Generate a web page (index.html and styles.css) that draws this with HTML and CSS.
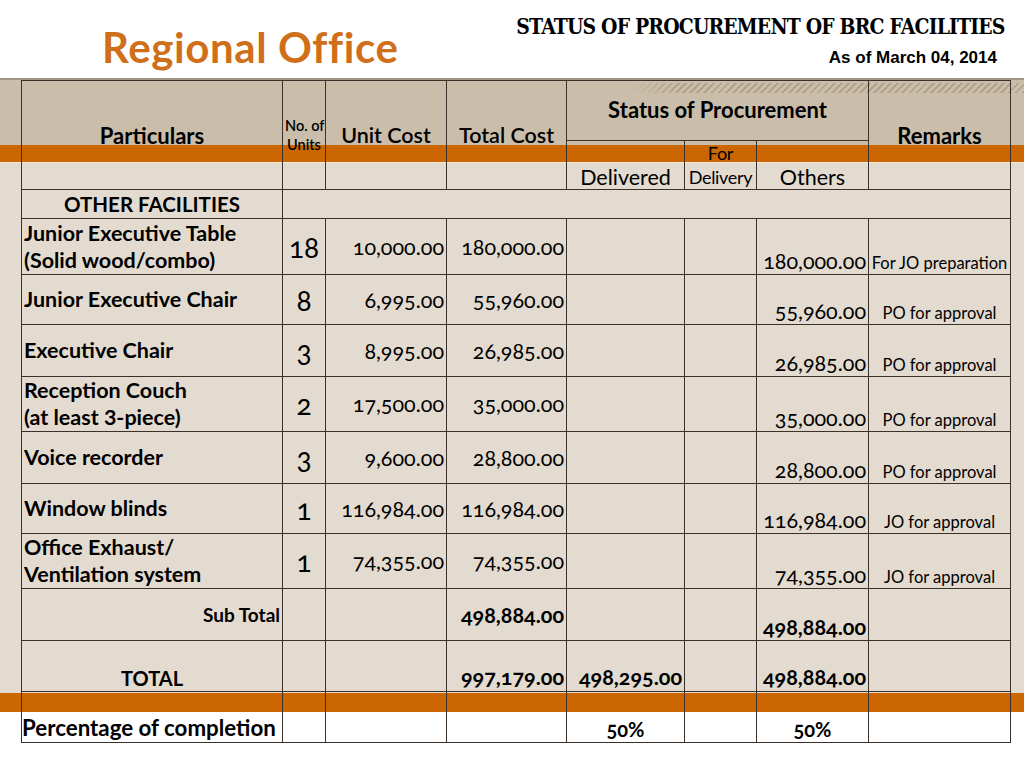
FILE: index.html
```html
<!DOCTYPE html>
<html>
<head>
<meta charset="utf-8">
<title>Regional Office - Status of Procurement</title>
<link rel="stylesheet" href="styles.css">
</head>
<body>
<div class="slide">
  <header class="top">
    <h1 class="title">Regional Office</h1>
    <div class="meta">
      <div class="doc-title">STATUS OF PROCUREMENT OF BRC FACILITIES</div>
      <div class="date">As of March 04, 2014</div>
    </div>
  </header>
  <div class="panel">
    <table class="grid">
      <colgroup>
        <col class="c-part"><col class="c-units"><col class="c-unit"><col class="c-total">
        <col class="c-del"><col class="c-fordel"><col class="c-oth"><col class="c-rem">
      </colgroup>
      <thead>
        <tr class="r-h1">
          <th rowspan="2" class="hd">Particulars</th>
          <th rowspan="2" class="hd-small">No. of<br>Units</th>
          <th rowspan="2" class="hd semi">Unit Cost</th>
          <th rowspan="2" class="hd semi">Total Cost</th>
          <th colspan="3" class="hd status">Status of Procurement</th>
          <th rowspan="2" class="hd">Remarks</th>
        </tr>
        <tr class="r-h2">
          <th class="sub">Delivered</th>
          <th class="sub small">For<br>Delivery</th>
          <th class="sub">Others</th>
        </tr>
      </thead>
      <tbody>
        <tr class="r-cat">
          <td class="cat">OTHER FACILITIES</td>
          <td colspan="7"></td>
        </tr>
        <tr class="r-56">
          <td class="part">Junior Executive Table<br>(Solid wood/combo)</td>
          <td class="units">18</td>
          <td class="num">10,000.00</td>
          <td class="num">180,000.00</td>
          <td></td><td></td>
          <td class="oth">180,000.00</td>
          <td class="rem">For JO preparation</td>
        </tr>
        <tr class="r-50">
          <td class="part">Junior Executive Chair</td>
          <td class="units">8</td>
          <td class="num">6,995.00</td>
          <td class="num">55,960.00</td>
          <td></td><td></td>
          <td class="oth">55,960.00</td>
          <td class="rem">PO for approval</td>
        </tr>
        <tr class="r-52">
          <td class="part">Executive Chair</td>
          <td class="units">3</td>
          <td class="num">8,995.00</td>
          <td class="num">26,985.00</td>
          <td></td><td></td>
          <td class="oth">26,985.00</td>
          <td class="rem">PO for approval</td>
        </tr>
        <tr class="r-55">
          <td class="part">Reception Couch<br>(at least 3-piece)</td>
          <td class="units">2</td>
          <td class="num">17,500.00</td>
          <td class="num">35,000.00</td>
          <td></td><td></td>
          <td class="oth">35,000.00</td>
          <td class="rem">PO for approval</td>
        </tr>
        <tr class="r-52">
          <td class="part">Voice recorder</td>
          <td class="units">3</td>
          <td class="num">9,600.00</td>
          <td class="num">28,800.00</td>
          <td></td><td></td>
          <td class="oth">28,800.00</td>
          <td class="rem">PO for approval</td>
        </tr>
        <tr class="r-50">
          <td class="part">Window blinds</td>
          <td class="units">1</td>
          <td class="num">116,984.00</td>
          <td class="num">116,984.00</td>
          <td></td><td></td>
          <td class="oth">116,984.00</td>
          <td class="rem">JO for approval</td>
        </tr>
        <tr class="r-55">
          <td class="part">Office Exhaust/<br>Ventilation system</td>
          <td class="units">1</td>
          <td class="num">74,355.00</td>
          <td class="num">74,355.00</td>
          <td></td><td></td>
          <td class="oth">74,355.00</td>
          <td class="rem">JO for approval</td>
        </tr>
        <tr class="r-52">
          <td class="subtotal">Sub Total</td>
          <td></td><td></td>
          <td class="num bold">498,884.00</td>
          <td></td><td></td>
          <td class="oth bold">498,884.00</td>
          <td></td>
        </tr>
        <tr class="r-51 r-total">
          <td class="total-label">TOTAL</td>
          <td></td><td></td>
          <td class="num bold">997,179.00</td>
          <td class="num bold">498,295.00</td>
          <td></td>
          <td class="oth bold">498,884.00</td>
          <td></td>
        </tr>
        <tr class="r-51 r-pct">
          <td class="pct-label">Percentage of completion</td>
          <td></td><td></td><td></td>
          <td class="pct">50%</td>
          <td></td>
          <td class="pct">50%</td>
          <td></td>
        </tr>
      </tbody>
    </table>
  </div>
</div>
</body>
</html>
```

FILE: styles.css
```css
* { box-sizing: border-box; }
html, body { margin: 0; padding: 0; background: #ffffff; }
body { width: 1024px; height: 768px; overflow: hidden; font-family: Lato, "Open Sans", sans-serif; color: #000; }

.slide { width: 1024px; height: 768px; }

.top {
  height: 78px;
  display: flex;
  justify-content: space-between;
  align-items: flex-start;
}
.title {
  margin: 22px 0 0 102px;
  font-family: Lato, sans-serif;
  font-weight: 700;
  font-size: 42px;
  line-height: 50px;
  color: #cf6f1a;
  letter-spacing: 0.6px;
}
.meta {
  display: flex;
  flex-direction: column;
  align-items: flex-end;
  padding: 12px 19px 0 0;
}
.doc-title {
  font-family: "DejaVu Serif Condensed", "DejaVu Serif", serif;
  font-weight: 700;
  font-size: 23px;
  line-height: 28px;
  letter-spacing: -0.9px;
  transform: scaleX(0.91);
  transform-origin: right center;
}
.date {
  margin: 8px 8px 0 0;
  font-family: "Liberation Sans Narrow", "Liberation Sans", sans-serif;
  font-weight: 700;
  font-size: 17px;
  line-height: 20px;
}

.panel {
  height: 690px;
  padding: 2px 0 0 21px;
  background:
    linear-gradient(to right, rgba(202,189,169,1) 0, rgba(202,189,169,0) 50px) 630px 5px / 394px 10px no-repeat,
    repeating-linear-gradient(-45deg, #b3a28a 0 2px, #cabda9 2px 5px) 630px 5px / 394px 10px no-repeat,
    linear-gradient(to bottom,
      #a09485 0, #a09485 2px,
      #cabda9 2px, #cabda9 67px,
      #cc6600 67px, #cc6600 84px,
      #f2e6d8 84px, #f2e6d8 85px,
      #e3dbd0 85px, #e3dbd0 615px,
      #cc6600 615px, #cc6600 634px,
      #ffffff 634px);
}

.grid {
  border-collapse: collapse;
  table-layout: fixed;
  width: 989px;
}
.c-part { width: 261px; }
.c-units { width: 43px; }
.c-unit { width: 121px; }
.c-total { width: 120px; }
.c-del { width: 118px; }
.c-fordel { width: 72px; }
.c-oth { width: 112px; }
.c-rem { width: 142px; }

.grid th, .grid td {
  border: 1px solid #3b3129;
  padding: 0 2px;
  overflow: visible;
  white-space: nowrap;
}

.r-h1 { height: 60px; }
.r-h2 { height: 49px; }
.r-cat { height: 29px; }
.r-56 { height: 56px; }
.r-55 { height: 55px; }
.r-52 { height: 52px; }
.r-51 { height: 51px; }
.r-50 { height: 50px; }

.hd {
  font-size: 22px;
  font-weight: 700;
  vertical-align: middle;
  text-align: center;
  padding-top: 2px;
}
.hd.semi { font-weight: 600; font-size: 21.5px; }
.hd.status { padding-top: 0; padding-bottom: 2px; }
.hd-small {
  font-size: 14.5px;
  font-weight: 600;
  line-height: 19px;
  text-align: center;
  vertical-align: middle;
  padding: 0;
}
.sub {
  font-size: 21.5px;
  font-weight: 400;
  vertical-align: bottom;
  text-align: center;
  line-height: 24px;
  padding-bottom: 0;
}
.sub.small { font-size: 18px; line-height: 24px; padding: 0; letter-spacing: -0.3px; }

.cat {
  font-size: 20.5px;
  font-weight: 700;
  text-align: center;
  vertical-align: middle;
}
.part {
  font-size: 21.5px;
  font-weight: 700;
  line-height: 27px;
  vertical-align: middle;
  text-align: left;
  padding-left: 0;
}
.units {
  font-size: 28px;
  text-align: center;
  vertical-align: middle;
  padding: 2px 0 0;
  font-variant-numeric: oldstyle-nums;
}
.num {
  font-size: 21.5px;
  text-align: right;
  vertical-align: middle;
  padding-right: 1px;
  font-variant-numeric: oldstyle-nums;
}
.oth {
  font-size: 21.5px;
  text-align: right;
  vertical-align: bottom;
  padding: 0 1px 2px 0;
  font-variant-numeric: oldstyle-nums;
}
.bold { font-weight: 700; }
.rem {
  font-size: 16.5px;
  text-align: center;
  vertical-align: bottom;
  padding: 0 1px 0;
  line-height: 22px;
}
.subtotal {
  font-size: 19px;
  font-weight: 700;
  text-align: right;
  vertical-align: middle;
  padding-right: 1px;
}
.r-total td { vertical-align: bottom; padding-bottom: 1px; }
.total-label {
  font-size: 20px;
  font-weight: 700;
  text-align: center;
}
.r-pct td { vertical-align: bottom; padding-bottom: 1px; }
.grid .pct-label {
  font-size: 22.3px;
  font-weight: 700;
  text-align: left;
  padding-left: 0;
}
.pct {
  font-size: 20px;
  font-weight: 700;
  text-align: center;
  font-variant-numeric: oldstyle-nums;
}
```
